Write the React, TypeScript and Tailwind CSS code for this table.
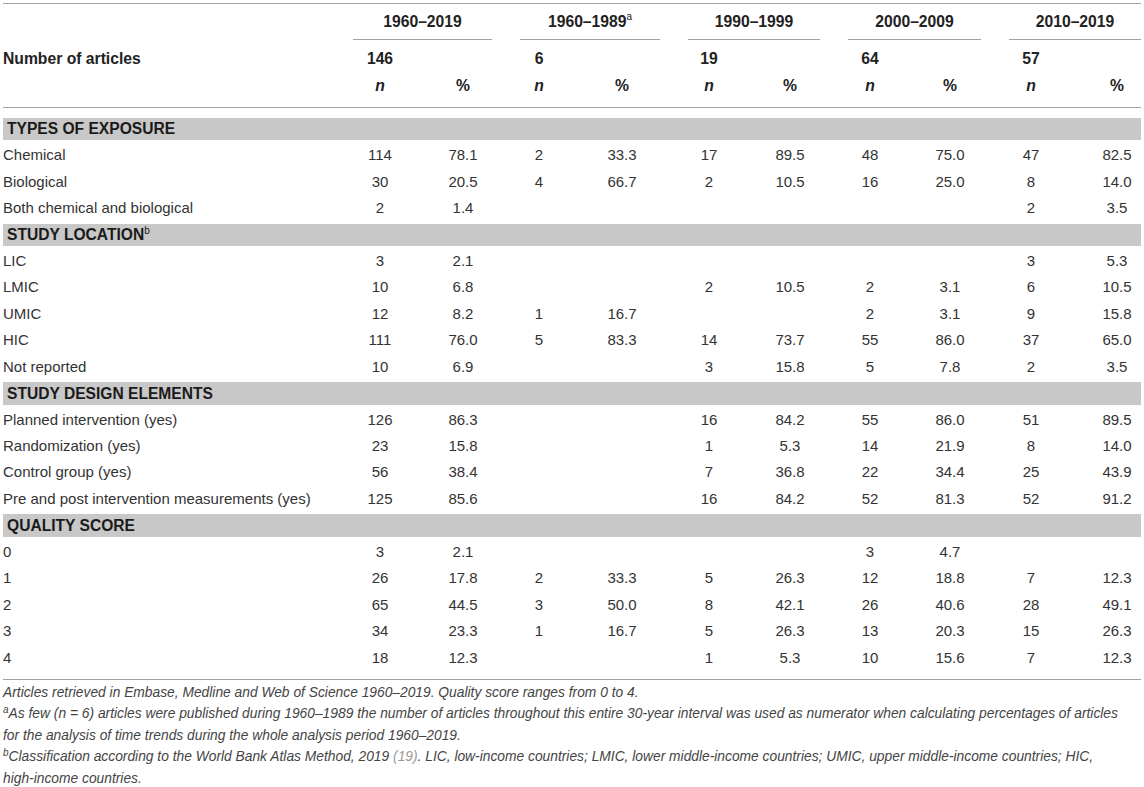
type Row = { label: string; cells: string[] };
type Section = { title: string; sup?: string; rows: Row[] };

const GRID =
  "grid grid-cols-[336px_82px_84px_68px_98px_76px_86px_74px_86px_76px_72px]";

const sections: Section[] = [
  {
    title: "TYPES OF EXPOSURE",
    rows: [
      { label: "Chemical", cells: ["114", "78.1", "2", "33.3", "17", "89.5", "48", "75.0", "47", "82.5"] },
      { label: "Biological", cells: ["30", "20.5", "4", "66.7", "2", "10.5", "16", "25.0", "8", "14.0"] },
      { label: "Both chemical and biological", cells: ["2", "1.4", "", "", "", "", "", "", "2", "3.5"] },
    ],
  },
  {
    title: "STUDY LOCATION",
    sup: "b",
    rows: [
      { label: "LIC", cells: ["3", "2.1", "", "", "", "", "", "", "3", "5.3"] },
      { label: "LMIC", cells: ["10", "6.8", "", "", "2", "10.5", "2", "3.1", "6", "10.5"] },
      { label: "UMIC", cells: ["12", "8.2", "1", "16.7", "", "", "2", "3.1", "9", "15.8"] },
      { label: "HIC", cells: ["111", "76.0", "5", "83.3", "14", "73.7", "55", "86.0", "37", "65.0"] },
      { label: "Not reported", cells: ["10", "6.9", "", "", "3", "15.8", "5", "7.8", "2", "3.5"] },
    ],
  },
  {
    title: "STUDY DESIGN ELEMENTS",
    rows: [
      { label: "Planned intervention (yes)", cells: ["126", "86.3", "", "", "16", "84.2", "55", "86.0", "51", "89.5"] },
      { label: "Randomization (yes)", cells: ["23", "15.8", "", "", "1", "5.3", "14", "21.9", "8", "14.0"] },
      { label: "Control group (yes)", cells: ["56", "38.4", "", "", "7", "36.8", "22", "34.4", "25", "43.9"] },
      {
        label: "Pre and post intervention measurements (yes)",
        cells: ["125", "85.6", "", "", "16", "84.2", "52", "81.3", "52", "91.2"],
      },
    ],
  },
  {
    title: "QUALITY SCORE",
    rows: [
      { label: "0", cells: ["3", "2.1", "", "", "", "", "3", "4.7", "", ""] },
      { label: "1", cells: ["26", "17.8", "2", "33.3", "5", "26.3", "12", "18.8", "7", "12.3"] },
      { label: "2", cells: ["65", "44.5", "3", "50.0", "8", "42.1", "26", "40.6", "28", "49.1"] },
      { label: "3", cells: ["34", "23.3", "1", "16.7", "5", "26.3", "13", "20.3", "15", "26.3"] },
      { label: "4", cells: ["18", "12.3", "", "", "1", "5.3", "10", "15.6", "7", "12.3"] },
    ],
  },
];

const groups = [
  { label: "1960–2019", n: "146", cls: "ml-[14px] mr-[13px]" },
  { label: "1960–1989", sup: "a", n: "6", cls: "ml-[15px] mr-[11px]" },
  { label: "1990–1999", n: "19", cls: "ml-[17px] mr-[13px]" },
  { label: "2000–2009", n: "64", cls: "ml-[15px] mr-[12px]" },
  { label: "2010–2019", n: "57", cls: "ml-[16px] mr-0" },
];

function cellClass(i: number) {
  return i === 9 ? "text-center pl-[24px]" : "text-center";
}

function Rule() {
  return <div className="h-px bg-[#a0a0a0]" />;
}

export default function App() {
  return (
    <div className="bg-white min-h-[787px] pt-[3px] pl-[3px] font-['Liberation_Sans',Arial,sans-serif] text-[15px] text-[#333]">
      <div className="w-[1138px]">
        <Rule />

        {/* group headings */}
        <div className={`${GRID} h-[36px] text-[15.7px]`}>
          <div />
          {groups.map((g) => (
            <div
              key={g.label}
              className={`col-span-2 ${g.cls} flex items-center justify-center border-b border-[#a0a0a0] font-bold text-[#222]`}
            >
              {g.label}
              {g.sup && <sup className="text-[10px] font-normal leading-none -top-[0.45em]">{g.sup}</sup>}
            </div>
          ))}
        </div>

        <div className={`${GRID} h-[38px] items-center font-bold text-[15.7px] text-[#222]`}>
          <div>Number of articles</div>
          {groups.map((g) => (
            <>
              <div key={g.n} className="text-center">
                {g.n}
              </div>
              <div key={g.n + "p"} />
            </>
          ))}
        </div>

        <div className={`${GRID} h-[16px] items-center font-bold text-[15.7px] text-[#222] leading-none`}>
          <div />
          {groups.map((g, i) => (
            <>
              <div key={g.label + "n"} className="text-center italic">
                n
              </div>
              <div key={g.label + "pc"} className={cellClass(i * 2 + 1)}>
                %
              </div>
            </>
          ))}
        </div>

        <div className="h-[13px]" />
        <Rule />
        <div className="h-[7.8px]" />

        {sections.map((s) => (
          <div key={s.title}>
            <div className="h-[26.45px] py-[2px]">
              <div className="h-full bg-[#c8c8c8] flex items-center pl-[4px] font-bold text-[15.6px] text-[#1a1a1a]">
                {s.title}
                {s.sup && <sup className="text-[10px] font-normal leading-none -top-[0.4em]">{s.sup}</sup>}
              </div>
            </div>
            {s.rows.map((r) => (
              <div key={r.label} className={`${GRID} h-[26.45px] items-center`}>
                <div>{r.label}</div>
                {r.cells.map((c, i) => (
                  <div key={i} className={cellClass(i)}>
                    {c}
                  </div>
                ))}
              </div>
            ))}
          </div>
        ))}

        <div className="h-[7.8px]" />
        <Rule />

        <div className="pt-[2px] text-[13.8px] leading-[21.5px] italic text-[#444]">
          <p>
            Articles retrieved in Embase, Medline and Web of Science 1960–2019. Quality score ranges from 0 to 4.
          </p>
          <p>
            <sup className="text-[10px] leading-none -top-[0.5em]">a</sup>As few (n = 6) articles were published
            during 1960–1989 the number of articles throughout this entire 30-year interval was used as numerator
            when calculating percentages of articles
            <br />
            for the analysis of time trends during the whole analysis period 1960–2019.
          </p>
          <p>
            <sup className="text-[10px] leading-none -top-[0.5em]">b</sup>Classification according to the World Bank
            Atlas Method, 2019 <span className="text-[#999]">(19)</span>. LIC, low-income countries; LMIC, lower
            middle-income countries; UMIC, upper middle-income countries; HIC,
            <br />
            high-income countries.
          </p>
        </div>
      </div>
    </div>
  );
}
